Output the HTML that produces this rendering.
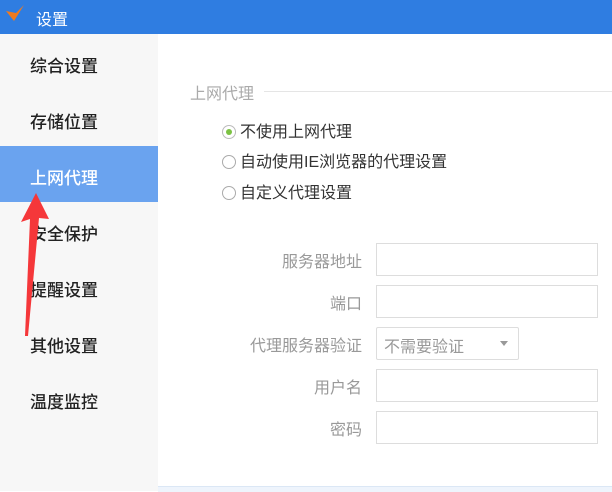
<!DOCTYPE html><html><head><meta charset="utf-8"><style>
body{margin:0;width:612px;height:491px;background:#fff;font-family:"Liberation Sans","Noto Sans CJK SC",sans-serif;position:relative;overflow:hidden}
.hd{position:absolute;left:0;top:0;width:612px;height:34px;background:#2f7de1;color:#fff;font-size:16px}
.side{position:absolute;left:0;top:34px;width:158px;height:457px;background:#f7f7f7}
.it{position:absolute;left:30px;font-size:17px;color:#222;font-weight:500}
.sel{position:absolute;left:0;top:146px;width:158px;height:56px;background:#6aa3ef}
.lbl{position:absolute;right:250px;font-size:16px;color:#999;text-align:right}
.in{position:absolute;left:376px;width:222px;height:33px;border:1px solid #ddd;box-sizing:border-box}
.r{position:absolute;left:222px;font-size:16px;color:#333}
.r i{display:inline-block;width:14px;height:14px;border:1px solid #aaa;border-radius:50%;vertical-align:-2px;margin-right:4px;box-sizing:border-box;position:relative;background:#fff}
</style></head><body>
<div class="hd"><svg style="position:absolute;left:4px;top:4px" width="22" height="20"><path d="M2 7 L10 17 L20 1 L12 9 Z" fill="#f07a1e"/></svg><span style="position:absolute;left:36px;top:6px">设置</span></div>
<div class="side"></div>
<div class="sel"></div>
<div class="it" style="top:52px">综合设置</div>
<div class="it" style="top:108px">存储位置</div>
<div class="it" style="top:164px;color:#fff">上网代理</div>
<div class="it" style="top:220px">安全保护</div>
<div class="it" style="top:276px">提醒设置</div>
<div class="it" style="top:332px">其他设置</div>
<div class="it" style="top:388px">温度监控</div>
<svg style="position:absolute;left:0;top:0" width="80" height="345"><path d="M36 193 L21 222 L30 219 L25 336 L28 336 L39 218 L49 219 Z" fill="#f5373a"/></svg>
<div style="position:absolute;left:190px;top:80px;font-size:16px;color:#aaa">上网代理</div>
<div style="position:absolute;left:264px;top:91px;width:348px;height:1px;background:#e5e5e5"></div>
<div class="r" style="top:118px"><i style="border-color:#bbb"><b style="position:absolute;left:3px;top:3px;width:6px;height:6px;border-radius:50%;background:#7cc243"></b></i>不使用上网代理</div>
<div class="r" style="top:148px"><i></i>自动使用IE浏览器的代理设置</div>
<div class="r" style="top:179px"><i></i>自定义代理设置</div>
<div class="lbl" style="top:248px">服务器地址</div><div class="in" style="top:243px"></div>
<div class="lbl" style="top:290px">端口</div><div class="in" style="top:285px"></div>
<div class="lbl" style="top:332px">代理服务器验证</div><div class="in" style="top:327px;width:143px;border-radius:2px"><span style="position:absolute;left:7px;top:5px;font-size:16px;color:#999">不需要验证</span><span style="position:absolute;left:123px;top:13px;border:4px solid transparent;border-top:5px solid #999"></span></div>
<div class="lbl" style="top:374px">用户名</div><div class="in" style="top:369px"></div>
<div class="lbl" style="top:416px">密码</div><div class="in" style="top:411px"></div>
<div style="position:absolute;left:158px;top:486px;width:454px;height:5px;background:#eef4fc;border-top:1px solid #dbe7f5"></div>
</body></html>
